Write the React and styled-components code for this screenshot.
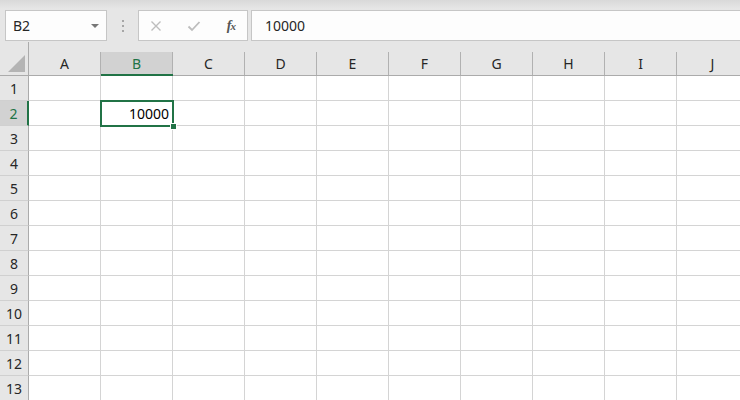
import React from 'react';
import styled, { createGlobalStyle } from 'styled-components';

const GlobalStyle = createGlobalStyle`
  html, body {
    margin: 0;
    padding: 0;
    width: 740px;
    height: 400px;
    overflow: hidden;
    background: #e6e6e6;
    font-family: "Noto Sans", "Liberation Sans", sans-serif;
  }
`

const COLS = ['A', 'B', 'C', 'D', 'E', 'F', 'G', 'H', 'I', 'J'];
const ROWS = [1, 2, 3, 4, 5, 6, 7, 8, 9, 10, 11, 12, 13];
const GREEN = '#217346';

const Page = styled.div`
  width: 740px;
  height: 400px;
  overflow: hidden;
  display: flex;
  flex-direction: column;
`
const FormulaBar = styled.div`
  height: 42px;
  flex-shrink: 0;
  box-sizing: border-box;
  padding-top: 10px;
  padding-left: 5px;
  display: flex;
  align-items: flex-start;
  background: linear-gradient(to bottom, #d9d9d9 0px, #e6e6e6 9px, #e6e6e6 100%);
`
const Box = styled.div`
  height: 31px;
  box-sizing: border-box;
  border: 1px solid #c6c6c6;
  background: #fdfdfd;
  display: flex;
  align-items: center;
  position: relative;
`
const NameBox = styled(Box)`
  width: 102px;
  padding-left: 7px;
  font-size: 14px;
  color: #262626;
`
const Arrow = styled.span`
  margin-left: auto;
  margin-right: 7px;
  width: 0;
  height: 0;
  border-left: 4px solid transparent;
  border-right: 4px solid transparent;
  border-top: 4px solid #777;
`
const Grip = styled.div`
  width: 31px;
  height: 31px;
  display: flex;
  flex-direction: column;
  align-items: center;
  justify-content: center;
  gap: 3px;
  span {
    width: 2px;
    height: 2px;
    background: #a6a6a6;
  }
`
const ButtonBox = styled(Box)`
  width: 110px;
  padding: 0 12px 0 11px;
  justify-content: space-between;
`
const FxText = styled.span`
  font-family: "Liberation Serif", "DejaVu Serif", serif;
  font-style: italic;
  font-weight: bold;
  font-size: 14px;
  color: #555;
  letter-spacing: -1px;
  sub {
    font-size: 11px;
    vertical-align: baseline;
  }
`
const FormulaInput = styled(Box)`
  flex: 1;
  margin-left: 3px;
  border-right: none;
  padding-left: 13px;
  font-size: 14px;
  color: #262626;
`
const Sheet = styled.div`
  flex: 1;
  display: grid;
  grid-template-columns: 29px repeat(10, 72px);
  grid-template-rows: 34px repeat(13, 25px);
  background: #ffffff;
`
const Corner = styled.div`
  background: #e6e6e6;
  position: relative;
  border-right: 1px solid #ababab;
  border-bottom: 1px solid #ababab;
  box-sizing: border-box;
  &::after {
    content: '';
    position: absolute;
    right: 3px;
    bottom: 3px;
    width: 0;
    height: 0;
    border-left: 17px solid transparent;
    border-bottom: 17px solid #b4b4b4;
  }
`
const ColHead = styled.div`
  background: #e6e6e6;
  box-sizing: border-box;
  padding-top: 10px;
  display: flex;
  border-bottom: ${p => (p.$active ? `2px solid ${GREEN}` : '1px solid #ababab')};
  span {
    flex: 1;
    display: flex;
    align-items: center;
    justify-content: center;
    font-size: 14px;
    color: ${p => (p.$active ? GREEN : '#262626')};
    background: ${p => (p.$active ? '#d2d2d2' : 'transparent')};
    border-right: 1px solid #b1b1b1;
  }
`
const RowHead = styled.div`
  background: ${p => (p.$active ? '#d2d2d2' : '#e6e6e6')};
  color: ${p => (p.$active ? GREEN : '#262626')};
  box-sizing: border-box;
  border-right: ${p => (p.$active ? `2px solid ${GREEN}` : '1px solid #ababab')};
  border-bottom: 1px solid #d0d0d0;
  display: flex;
  align-items: center;
  justify-content: center;
  font-size: 14px;
`
const Cell = styled.div`
  box-sizing: border-box;
  border-right: 1px solid #d4d4d4;
  border-bottom: 1px solid #d4d4d4;
  position: relative;
  display: flex;
  align-items: center;
  justify-content: flex-end;
  padding-right: 3px;
  font-size: 14px;
  color: #000;
`
const Selection = styled.div`
  position: absolute;
  z-index: 2;
  left: -1px;
  top: -1px;
  right: -2px;
  bottom: -2px;
  border: 2px solid ${GREEN};
  &::after {
    content: '';
    position: absolute;
    right: -5px;
    bottom: -5px;
    width: 5px;
    height: 5px;
    background: ${GREEN};
    border: 1px solid #fff;
  }
`

function CrossIcon() {
  return (
    <svg width="12" height="12" viewBox="0 0 12 12">
      <path d="M1.5 1.5 L10.5 10.5 M10.5 1.5 L1.5 10.5" stroke="#bdbdbd" strokeWidth="1.4" fill="none" />
    </svg>
  );
}

function CheckIcon() {
  return (
    <svg width="14" height="12" viewBox="0 0 14 12">
      <path d="M1.5 6.5 L5 10 L12.5 2" stroke="#bdbdbd" strokeWidth="1.8" fill="none" />
    </svg>
  );
}

export default function App() {
  return (
    <>
      <GlobalStyle />
      <Page>
        <FormulaBar>
          <NameBox>
            B2
            <Arrow />
          </NameBox>
          <Grip>
            <span />
            <span />
            <span />
          </Grip>
          <ButtonBox>
            <CrossIcon />
            <CheckIcon />
            <FxText>f<sub>x</sub></FxText>
          </ButtonBox>
          <FormulaInput>10000</FormulaInput>
        </FormulaBar>
        <Sheet>
          <Corner />
          {COLS.map(c => (
            <ColHead key={c} $active={c === 'B'}>
              <span>{c}</span>
            </ColHead>
          ))}
          {ROWS.map(r => (
            <React.Fragment key={r}>
              <RowHead $active={r === 2}>{r}</RowHead>
              {COLS.map(c => {
                const active = r === 2 && c === 'B';
                return (
                  <Cell key={c}>
                    {active && '10000'}
                    {active && <Selection />}
                  </Cell>
                );
              })}
            </React.Fragment>
          ))}
        </Sheet>
      </Page>
    </>
  );
}
